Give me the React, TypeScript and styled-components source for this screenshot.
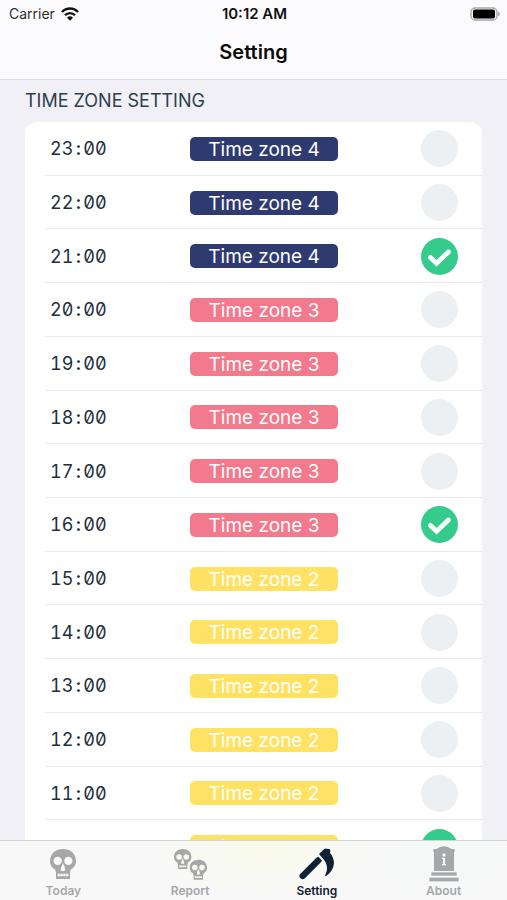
import React, { useState } from "react";
import styled, { createGlobalStyle } from "styled-components";

const GlobalStyle = createGlobalStyle`
  *, *::before, *::after { box-sizing: border-box; }
  body {
    margin: 0;
    background: #f1f0f6;
    color: #1e2f3d;
    font-family: Inter, "Liberation Sans", sans-serif;
    -webkit-font-smoothing: antialiased;
  }
`;

const Screen = styled.div`
  display: flex;
  flex-direction: column;
  min-height: 100vh;
`;

const TopBar = styled.header`
  background: #fbfbfd;
  border-bottom: 1px solid #dcdce0;
`;

const StatusBar = styled.div`
  display: grid;
  grid-template-columns: 1fr auto 1fr;
  align-items: center;
  height: 27px;
  padding: 0 7px 0 9px;
  color: #111;
  font-size: 14px;
`;

const Carrier = styled.div`
  display: flex;
  align-items: center;
  gap: 6px;
  color: #2c2c2e;
`;

const Clock = styled.time`
  font-size: 15px;
  font-weight: 600;
`;

const BatterySlot = styled.div`
  display: flex;
  justify-content: flex-end;
`;

const Title = styled.h1`
  margin: 0;
  height: 52px;
  line-height: 50px;
  text-align: center;
  color: #0b0b0c;
  font-size: 20px;
  font-weight: 600;
`;

const Content = styled.main`
  display: flex;
  flex: 1;
  flex-direction: column;
  padding: 0 25px 26px;
`;

const SectionTitle = styled.h2`
  margin: 0;
  height: 42px;
  line-height: 42px;
  color: #2d3f4d;
  font-size: 18px;
  font-weight: 400;
`;

const Card = styled.ul`
  display: grid;
  flex: 1;
  grid-auto-rows: minmax(44px, 1fr);
  margin: 0;
  padding: 0 0 0 20px;
  border-radius: 12px;
  background: #fff;
  list-style: none;
`;

const Row = styled.li`
  border-bottom: 1px solid #e9e9ec;
`;

const RowLabel = styled.label`
  display: grid;
  grid-template-columns: 7fr 148px 6fr;
  align-items: center;
  height: 100%;
  padding: 1px 24px 0 5px;
`;

const Hour = styled.span`
  font-size: 18px;
  font-variant-numeric: tabular-nums slashed-zero;
`;

const Colon = styled.span`
  display: inline-block;
  width: 10px;
  font-weight: 600;
  text-align: center;
`;

const zoneColors: Record<number, string> = {
  4: "#2f3b70",
  3: "#f27a8c",
  2: "#ffe263",
};

const ZoneBadge = styled.span<{ $zone: number }>`
  height: 24px;
  border-radius: 5px;
  background: ${(p) => zoneColors[p.$zone]};
  color: #fff;
  font-size: 19px;
  line-height: 25px;
  text-align: center;
`;

const CheckSlot = styled.span`
  display: grid;
  justify-self: end;

  > * {
    grid-area: 1 / 1;
  }

  svg {
    pointer-events: none;
  }
`;

const Check = styled.input`
  appearance: none;
  width: 37px;
  height: 37px;
  margin: 0;
  border-radius: 50%;
  background: #ecf0f2;
  cursor: pointer;

  &:checked {
    background: #34cb8c;
  }

  &:not(:checked) + svg {
    visibility: hidden;
  }
`;

const TabBar = styled.nav`
  position: fixed;
  right: 0;
  bottom: 0;
  left: 0;
  display: grid;
  grid-template-columns: repeat(4, 1fr);
  height: 60px;
  border-top: 1px solid #d3d4d6;
  background:
    radial-gradient(ellipse 24% 60px at 52% 0, #fafbea, transparent),
    radial-gradient(ellipse 16% 60px at 87% 0, #f3faf6, transparent),
    #f8f8f9;
`;

const Tab = styled.button<{ $active: boolean }>`
  display: flex;
  flex-direction: column;
  align-items: center;
  padding: 4px 0 0;
  border: 0;
  background: none;
  color: ${(p) => (p.$active ? "#0f2233" : "#a6a7a8")};
  font: inherit;
  font-size: 12px;
  font-weight: 600;
  line-height: 16px;
  cursor: pointer;
`;

const TabIcon = styled.span`
  display: flex;
  align-items: center;
  justify-content: center;
  height: 38px;
`;

const WifiIcon = () => (
  <svg width="18" height="14" viewBox="0 0 54 42" fill="none" aria-hidden="true">
    <path d="M3 15C16 1 38 1 51 15" stroke="#111" strokeWidth="7" />
    <path d="M12 25C20 16 34 16 42 25" stroke="#111" strokeWidth="7" />
    <path d="M27 41L18 32Q27 24 36 32Z" fill="#111" />
  </svg>
);

const BatteryIcon = () => (
  <svg width="30" height="14" viewBox="0 0 30 14" role="img" aria-label="Battery full">
    <rect x="1" y="1" width="26" height="12" rx="4" fill="#f4f4f5" stroke="#a9a9ab" strokeWidth="1.4" />
    <rect x="3" y="2.5" width="22" height="9" rx="2" fill="#000" />
    <path d="M28 4.8Q30 5.6 30 7T28 9.2Z" fill="#a9a9ab" />
  </svg>
);

const CheckMark = () => (
  <svg width="37" height="37" viewBox="0 0 37 37" fill="none" aria-hidden="true">
    <path d="M9.4 19.4L15.6 25.2L27.4 14" stroke="#fff" strokeWidth="4.8" strokeLinecap="round" strokeLinejoin="miter" />
  </svg>
);

const skullPath =
  "M39 0C61 0 78 14 78 36C78 49 71 57 63 61L60 70V90H18V70L15 61C7 57 0 49 0 36C0 14 17 0 39 0Z" +
  "M23 23A12.5 12.5 0 1 0 23 48A12.5 12.5 0 1 0 23 23Z" +
  "M55 23A12.5 12.5 0 1 0 55 48A12.5 12.5 0 1 0 55 23Z" +
  "M39 42C35 50 32 58 32 64Q35 67 39 67T46 64C46 58 43 50 39 42Z" +
  "M23 74V82H55V74Z";

const Skull = () => (
  <>
    <path d={skullPath} fill="currentColor" fillRule="evenodd" />
    <path d="M31 74V82M39 74V82M47 74V82" stroke="currentColor" strokeWidth="1.2" />
  </>
);

const SkullIcon = () => (
  <svg width="26" height="30" viewBox="0 0 78 90" aria-hidden="true">
    <Skull />
  </svg>
);

const TwoSkullsIcon = () => (
  <svg width="34" height="31" viewBox="0 0 102 93" aria-hidden="true">
    <g transform="translate(3 0) scale(0.67)">
      <Skull />
    </g>
    <g transform="translate(50 32) scale(0.67)">
      <Skull />
    </g>
  </svg>
);

const ScytheIcon = () => (
  <svg width="36" height="32" viewBox="0 0 108 96" aria-hidden="true">
    <path d="M11 84L59 36" stroke="currentColor" strokeWidth="19" strokeLinecap="round" />
    <path
      d="M60 18L75 4Q78 1 82 2L90 3Q94 4 94 8L93 15C109 32 112 64 80 85Q77 85 79 80C86 66 86 52 77 38Z"
      fill="currentColor"
    />
    <path d="M55 20L76 42" stroke="#f7f8f7" strokeWidth="4" />
  </svg>
);

const TombIcon = () => (
  <svg width="30" height="36" viewBox="0 0 90 108" aria-hidden="true">
    <g fill="currentColor">
      <path d="M13 9H22Q45 -7 68 9H77V19H75V75H15V19H13Z" />
      <path d="M7 79H83V89H7Z" />
      <path d="M1 95H89V106H1Z" />
    </g>
    <g fill="#f7f8f8">
      <circle cx="45" cy="27" r="5" />
      <path d="M39 35H48V54H51V58H39V54H42V39H39Z" />
    </g>
  </svg>
);

const hours = [
  { hour: "23", zone: 4 },
  { hour: "22", zone: 4 },
  { hour: "21", zone: 4 },
  { hour: "20", zone: 3 },
  { hour: "19", zone: 3 },
  { hour: "18", zone: 3 },
  { hour: "17", zone: 3 },
  { hour: "16", zone: 3 },
  { hour: "15", zone: 2 },
  { hour: "14", zone: 2 },
  { hour: "13", zone: 2 },
  { hour: "12", zone: 2 },
  { hour: "11", zone: 2 },
  { hour: "10", zone: 2 },
];

const tabs = [
  { name: "Today", Icon: SkullIcon },
  { name: "Report", Icon: TwoSkullsIcon },
  { name: "Setting", Icon: ScytheIcon },
  { name: "About", Icon: TombIcon },
];

export default function App() {
  const [checked, setChecked] = useState<string[]>(["21", "16", "10"]);
  const [activeTab, setActiveTab] = useState("Setting");

  const toggle = (hour: string) =>
    setChecked((list) => (list.includes(hour) ? list.filter((h) => h !== hour) : [...list, hour]));

  return (
    <Screen>
      <GlobalStyle />
      <TopBar>
        <StatusBar>
          <Carrier>
            Carrier
            <WifiIcon />
          </Carrier>
          <Clock>10:12 AM</Clock>
          <BatterySlot>
            <BatteryIcon />
          </BatterySlot>
        </StatusBar>
        <Title>Setting</Title>
      </TopBar>
      <Content>
        <SectionTitle>TIME ZONE SETTING</SectionTitle>
        <Card>
          {hours.map(({ hour, zone }) => (
            <Row key={hour}>
              <RowLabel>
                <Hour>
                  {hour}
                  <Colon>:</Colon>
                  00
                </Hour>
                <ZoneBadge $zone={zone}>Time zone {zone}</ZoneBadge>
                <CheckSlot>
                  <Check type="checkbox" checked={checked.includes(hour)} onChange={() => toggle(hour)} />
                  <CheckMark />
                </CheckSlot>
              </RowLabel>
            </Row>
          ))}
        </Card>
      </Content>
      <TabBar>
        {tabs.map(({ name, Icon }) => (
          <Tab
            key={name}
            type="button"
            $active={name === activeTab}
            aria-current={name === activeTab ? "page" : undefined}
            onClick={() => setActiveTab(name)}
          >
            <TabIcon>
              <Icon />
            </TabIcon>
            {name}
          </Tab>
        ))}
      </TabBar>
    </Screen>
  );
}
